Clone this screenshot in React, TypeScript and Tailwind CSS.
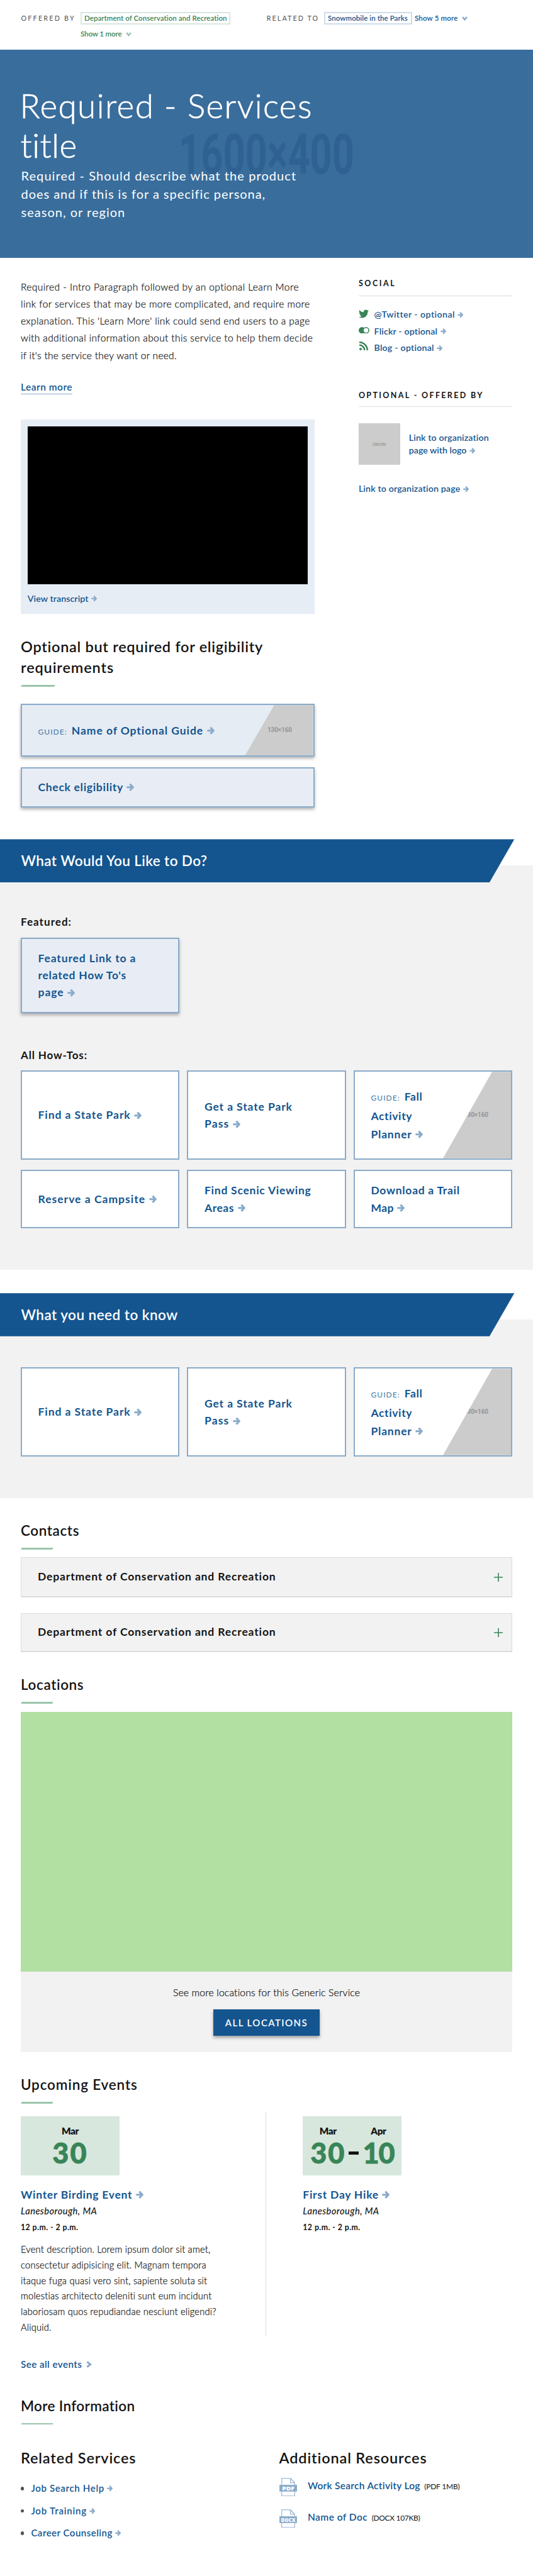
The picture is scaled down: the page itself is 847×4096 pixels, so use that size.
import React from "react";
import { FaTwitter, FaRss } from "react-icons/fa";

function Arrow({ className = "ml-[4.5px] size-[9.5px]" }: { className?: string }) {
  return (
    <svg viewBox="0 0 16 16" className={"inline-block fill-none stroke-[#8aabc9] align-baseline " + className}>
      <path d="M0.5 8h12" strokeWidth="3.8" />
      <path d="M7 1.5 13 8l-6 6.5" strokeWidth="4" />
    </svg>
  );
}

function BigArrow() {
  return <Arrow className="ml-[5.5px] size-[12.5px] translate-y-[0.5px]" />;
}

function Chevron({ className }: { className: string }) {
  return (
    <svg viewBox="0 0 16 16" className={"inline-block fill-none " + className}>
      <path d="M2 3.5 8 11l6-7.5" strokeWidth="4.5" />
    </svg>
  );
}

function Bar({ className }: { className: string }) {
  return <div className={"ml-[1px] -skew-x-[25deg] bg-[#9bc4ab] " + className} />;
}

function Placeholder({ className, w }: { className: string; w: number }) {
  return (
    <svg className={className}>
      <text x="0" y="8" textLength={w} lengthAdjust="spacing" className="fill-[#969696] font-['Roboto'] text-[10px]">
        130×160
      </text>
    </svg>
  );
}

const cardText = "text-[17.5px] font-bold text-[#14558f]";
const cardFrame = "flex items-center border-2 border-[#8aabc9] pl-[25.5px]";
const raised = "shadow-[0_3px_5px_rgba(0,0,0,0.3)]";
const light = "font-light [-webkit-text-stroke:0.25px]";

function Card({ children }: { children: React.ReactNode }) {
  return (
    <div className={"bg-white leading-[27.3px] " + cardFrame + " " + cardText}>
      <div>{children}</div>
    </div>
  );
}

function GuideLabel() {
  return <span className="mr-[7px] text-[12px] font-normal tracking-[0.088em] text-[#4377a5]">GUIDE:</span>;
}

function TopCards() {
  return (
    <>
      <Card><span className="tracking-[0.053em]">Find a State Park</span><BigArrow /></Card>
      <Card><span className="tracking-[0.051em]">Get a State Park</span><br /><span className="tracking-[0.064em]">Pass</span><BigArrow /></Card>
      <div className={"relative bg-white leading-[29px] " + cardFrame + " " + cardText}>
        <div className="relative z-10">
          <GuideLabel />
          <span className="tracking-[0.034em]">Fall</span>
          <br />
          <span className="tracking-[0.036em]">Activity</span>
          <br />
          <span className="tracking-[0.046em]">Planner</span>
          <BigArrow />
        </div>
        <div className="absolute inset-y-0 right-0 w-[108px] bg-[#ccc] [clip-path:polygon(78px_0,100%_0,100%_100%,0_100%)]">
          <Placeholder className="absolute top-[64px] left-[33px] h-[10px] w-[42px]" w={39} />
        </div>
      </div>
    </>
  );
}

function Banner({ children }: { children: React.ReactNode }) {
  return (
    <h2 className="h-[68.6px] bg-[#14558f] pl-[33.5px] text-[22.5px] leading-[69.5px] font-semibold text-white [clip-path:polygon(0_0,817.3px_0,777.9px_100%,0_100%)]">
      {children}
    </h2>
  );
}

function FileIcon({ label, w }: { label: string; w: number }) {
  return (
    <svg viewBox="0 0 34 36" className="h-[29.5px] w-[28px] shrink-0">
      <path d="M4.5 1h17l8 8.5V35h-25zM21.5 1v8.5h8" className="fill-white stroke-[#8aabc9]" strokeWidth="1.3" />
      <path d="M0 13.5h34v13H0z" className="fill-[#8aabc9]" />
      <text x={17 - w / 2} y="24" textLength={w} lengthAdjust="spacingAndGlyphs" className="fill-white font-['Open_Sans'] text-[11px] font-extrabold">
        {label}
      </text>
    </svg>
  );
}

function Plus() {
  return (
    <svg viewBox="0 0 14 14" className="mr-[14px] size-[14px] fill-none stroke-[#388557]" strokeWidth="1.6">
      <path d="M0 7h14M7 0v14" />
    </svg>
  );
}

function Contact({ className }: { className: string }) {
  return (
    <div className={"flex items-center justify-between border border-b-2 border-[#dcdcdc] bg-[#f2f2f2] pl-[26px] text-[17.5px] font-bold tracking-[0.049em] " + className}>
      Department of Conservation and Recreation
      <Plus />
    </div>
  );
}

function DateBox({ children }: { children: React.ReactNode }) {
  return <div className="flex h-[94.3px] w-[157px] justify-center bg-[#d7e7dd] pt-[13.9px]">{children}</div>;
}

function Day({ month, day, className }: { month: string; day: string; className: string }) {
  return (
    <div className="flex flex-col items-center">
      <div className="text-[15.2px] leading-[18px] font-extrabold tracking-[-0.025em] text-[#141414]">{month}</div>
      <div className={"mt-[3.8px] text-[45px] leading-[44px] font-black text-[#388557] [-webkit-text-stroke:0.8px] " + className}>{day}</div>
    </div>
  );
}

function EventInfo({ children }: { children: React.ReactNode }) {
  return (
    <>
      <div className="mt-[20.6px] text-[17.5px] leading-[20px] font-bold text-[#14558f]">{children}<BigArrow /></div>
      <div className="mt-[6.65px] text-[14.6px] leading-[20px] font-medium tracking-[0.032em] italic">Lanesborough, MA</div>
      <div className="mt-[5.5px] text-[12.3px] leading-[20px] font-bold tracking-[0.037em]">12 p.m. - 2 p.m.</div>
    </>
  );
}

function Bullet() {
  return <i className="mr-[11px] size-[5.4px] rounded-full bg-[#535353]" />;
}

const h2 = "text-[22.5px] leading-[30px] font-semibold";

export default function App() {
  return (
    <div className="h-[4096px] w-[847px] overflow-hidden bg-white font-['Lato','Open_Sans',sans-serif] whitespace-nowrap text-[#141414]">
      <header className="flex h-[79.4px] pt-[19px] pl-[33.5px] text-[11.5px] leading-[20.4px] font-semibold">
        <div className="w-[94.5px] text-[10.75px] font-normal tracking-[0.206em] text-[#535353]">OFFERED BY</div>
        <div className="w-[295.7px] text-[#388557]">
          <div className="w-[238px] border-2 border-[#d7e7dd] pl-[4px] leading-[16.4px] tracking-[0.005em]">Department of Conservation and Recreation</div>
          <div className="mt-[4.6px] flex items-center"><span className="tracking-[-0.010em]">Show 1 more</span><Chevron className="ml-[7px] size-[9px] stroke-[#9bc4ab]" /></div>
        </div>
        <div className="w-[91.3px] text-[10.75px] font-normal tracking-[0.194em] text-[#535353]">RELATED TO</div>
        <div className="flex h-[20.4px] items-center text-[#14558f]">
          <div className="w-[140px] border-2 border-[#d0dde9] pl-[4px] leading-[16.4px] tracking-[0.007em]">Snowmobile in the Parks</div>
          <span className="ml-[4px] tracking-[0.015em]">Show 5 more</span>
          <Chevron className="ml-[6.5px] size-[9px] stroke-[#8aabc9]" />
        </div>
      </header>

      <section className="relative h-[330.7px] bg-[#396d9c] pt-[56.5px] pl-[33.5px] text-white">
        <svg className="absolute top-[133.6px] left-[289px] h-[66px] w-[276px] overflow-visible">
          <text x="-5" y="63.4" textLength="279" lengthAdjust="spacingAndGlyphs" className="fill-[#2f6292] font-['Roboto'] text-[89px] font-bold">1600×400</text>
        </svg>
        <h1 className="relative -ml-[2px] text-[53px] leading-[63.4px] font-light [-webkit-text-stroke:0.6px]">
          <span className="tracking-[0.027em]">Required - Services</span><br />
          <span className="ml-[1px] tracking-[0.010em]">title</span>
        </h1>
        <p className="relative mt-[1.85px] text-[20px] leading-[29px]">
          <span className="tracking-[0.054em]">Required - Should describe what the product</span><br />
          <span className="tracking-[0.048em]">does and if this is for a specific persona,</span><br />
          <span className="tracking-[0.051em]">season, or region</span>
        </p>
      </section>

      <section className="flex h-[924.3px] pl-[33px]">
        <div className="w-[466.7px] pt-[32.5px]">
          <p className={"text-[15.5px] leading-[27.28px] " + light}>
            <span className="tracking-[0.027em]">Required - Intro Paragraph followed by an optional Learn More</span><br />
            <span className="tracking-[0.029em]">link for services that may be more complicated, and require more</span><br />
            <span className="tracking-[0.023em]">explanation. This 'Learn More' link could send end users to a page</span><br />
            <span className="tracking-[0.025em]">with additional information about this service to help them decide</span><br />
            <span className="tracking-[0.018em]">if it's the service they want or need.</span>
          </p>
          <div className="mt-[25.5px] w-fit border-b border-[#8aabc9] text-[15.5px] leading-[22px] font-semibold tracking-[0.031em] text-[#14558f]">Learn more</div>
          <div className="mt-[39.7px] h-[308.5px] bg-[#e6edf5] p-[10.8px]">
            <div className="h-[250.7px] bg-black" />
            <div className="mt-[13.3px] text-[14.2px] leading-[20px] font-semibold tracking-[0.006em] text-[#14558f]">View transcript<Arrow /></div>
          </div>
          <h2 className="mt-[36.5px] text-[23.5px] leading-[33px] font-semibold">
            <span className="tracking-[0.030em]">Optional but required for eligibility</span><br />
            <span className="tracking-[0.037em]">requirements</span>
          </h2>
          <Bar className="mt-[10.6px] h-[2.8px] w-[53px]" />
          <div className={"relative mt-[27.8px] h-[83.5px] bg-[#e5ecf4] " + cardFrame + " " + cardText + " " + raised}>
            <div className="pt-[2px]"><GuideLabel /><span className="tracking-[0.053em]">Name of Optional Guide</span><BigArrow /></div>
            <div className="absolute inset-y-0 right-0 w-[108px] bg-[#ccc] [clip-path:polygon(46px_0,100%_0,100%_100%,0_100%)]">
              <Placeholder className="absolute top-[35px] left-[35px] h-[10px] w-[42px]" w={39} />
            </div>
          </div>
          <div className={"mt-[16.7px] h-[64.7px] bg-[#e8edf5] " + cardFrame + " " + cardText + " " + raised}>
            <div className="tracking-[0.040em]">Check eligibility<BigArrow /></div>
          </div>
        </div>

        <aside className="ml-[70.2px] w-[244px] pt-[31.2px] text-[14.2px] font-semibold">
          <h3 className="text-[12.5px] leading-[20px] font-bold tracking-[0.205em]">SOCIAL</h3>
          <div className="mt-[8.4px] h-[1.65px] bg-[#dcdcdc]" />
          <ul className="mt-[16px] leading-[26.45px] text-[#14558f]">
            <li className="flex items-center">
              <FaTwitter className="mr-[8.7px] size-[16px] -translate-y-[2px] fill-[#388557]" />
              <span className="tracking-[0.031em]">@Twitter - optional</span><Arrow />
            </li>
            <li className="flex items-center">
              <svg viewBox="0 0 32 20" className="mr-[7.7px] h-[10.6px] w-[17px] -translate-y-[2px]">
                <circle cx="10" cy="10" r="10" className="fill-[#388557]" />
                <circle cx="22" cy="10" r="8.5" className="fill-white stroke-[#388557]" strokeWidth="3" />
              </svg>
              <span className="tracking-[0.012em]">Flickr - optional</span><Arrow />
            </li>
            <li className="flex items-center">
              <FaRss className="mr-[8.7px] size-[16px] -translate-y-[3px] fill-[#388557]" />
              <span className="tracking-[0.016em]">Blog - optional</span><Arrow />
            </li>
          </ul>
          <h3 className="mt-[51.9px] text-[12.5px] leading-[20px] font-bold tracking-[0.188em]">OPTIONAL - OFFERED BY</h3>
          <div className="mt-[7.3px] h-[1.65px] bg-[#dcdcdc]" />
          <div className="mt-[25.6px] flex items-center text-[#14558f]">
            <div className="flex h-[66.2px] w-[66.4px] items-center justify-center bg-[#ccc]">
              <svg className="h-[6px] w-[22px]">
                <text x="0" y="5.5" textLength="21" lengthAdjust="spacingAndGlyphs" className="fill-[#969696] font-['Roboto'] text-[7.5px]">250×250</text>
              </svg>
            </div>
            <div className="ml-[13.5px] leading-[19.8px]"><span className="tracking-[0.011em]">Link to organization</span><br />page with logo<Arrow /></div>
          </div>
          <div className="mt-[28px] leading-[20px] tracking-[0.011em] text-[#14558f]">Link to organization page<Arrow /></div>
        </aside>
      </section>

      <section className="h-[684.7px] bg-[linear-gradient(#fff_42px,#f2f2f2_42px)]">
        <Banner><span className="tracking-[0.017em]">What Would You Like to Do?</span></Banner>
        <div className="px-[33px]">
          <h3 className="mt-[52.9px] text-[17px] leading-[20px] font-bold tracking-[0.062em]">Featured:</h3>
          <div className={"mt-[14.8px] h-[119.9px] w-[252.2px] bg-[#e8edf5] leading-[27.3px] " + cardFrame + " " + cardText + " " + raised}>
            <div>
              <span className="tracking-[0.050em]">Featured Link to a</span><br />
              <span className="tracking-[0.043em]">related How To's</span><br />
              <span className="tracking-[0.055em]">page</span><BigArrow />
            </div>
          </div>
          <h3 className="mt-[57.2px] text-[17px] leading-[20px] font-bold tracking-[0.051em]">All How-Tos:</h3>
          <div className="mt-[14.6px] grid grid-cols-3 grid-rows-[141.4px_92.6px] gap-x-[12.4px] gap-y-[16.5px]">
            <TopCards />
            <Card><span className="tracking-[0.058em]">Reserve a Campsite</span><BigArrow /></Card>
            <Card><span className="tracking-[0.043em]">Find Scenic Viewing</span><br /><span className="tracking-[0.031em]">Areas</span><BigArrow /></Card>
            <Card><span className="tracking-[0.041em]">Download a Trail</span><br /><span className="tracking-[0.023em]">Map</span><BigArrow /></Card>
          </div>
        </div>
      </section>

      <section className="mt-[37.2px] h-[325.7px] bg-[linear-gradient(#fff_41.6px,#f2f2f2_41.6px)]">
        <Banner><span className="tracking-[0.021em]">What you need to know</span></Banner>
        <div className="mt-[49.6px] grid grid-cols-3 grid-rows-[141.4px] gap-x-[12.4px] px-[33px]">
          <TopCards />
        </div>
      </section>

      <main className="px-[33px]">
        <h2 className={"mt-[36.7px] tracking-[0.026em] " + h2}>Contacts</h2>
        <Bar className="mt-[11.9px] h-[2.5px] w-[49.7px]" />
        <Contact className="mt-[13.2px] h-[63.7px]" />
        <Contact className="mt-[24.8px] h-[62.8px]" />

        <h2 className={"mt-[36.4px] tracking-[0.027em] " + h2}>Locations</h2>
        <Bar className="mt-[12.1px] h-[2.5px] w-[49.7px]" />
        <div className="mt-[13.3px] h-[413.2px] bg-[#b2dfa2]" />
        <div className="flex h-[128.3px] flex-col items-center bg-[#f2f2f2] pt-[23px]">
          <p className={"text-[15.7px] leading-[20px] tracking-[0.011em] " + light}>See more locations for this Generic Service</p>
          <div className="mt-[17.5px] flex h-[41.4px] w-[169.7px] items-center justify-center bg-[#14558f] text-[15px] font-semibold tracking-[0.096em] text-white shadow-[0_3px_5px_rgba(0,0,0,0.35)]">ALL LOCATIONS</div>
        </div>

        <h2 className={"mt-[36.7px] tracking-[0.037em] " + h2}>Upcoming Events</h2>
        <Bar className="mt-[11.9px] h-[2.5px] w-[49.7px]" />
        <div className="mt-[13.2px] flex h-[357.2px]">
          <div className="w-[390.2px] border-r border-[#dcdcdc] pt-[7.4px]">
            <DateBox><Day month="Mar" day="30" className="tracking-[0.045em]" /></DateBox>
            <EventInfo><span className="tracking-[0.041em]">Winter Birding Event</span></EventInfo>
            <p className={"mt-[13.1px] text-[14.6px] leading-[24.82px] tracking-[0.017em] " + light}>
              Event description. Lorem ipsum dolor sit amet,<br />
              consectetur adipisicing elit. Magnam tempora<br />
              itaque fuga quasi vero sint, sapiente soluta sit<br />
              molestias architecto deleniti sunt eum incidunt<br />
              laboriosam quos repudiandae nesciunt eligendi?<br />
              Aliquid.
            </p>
          </div>
          <div className="pt-[7.4px] pl-[58.1px]">
            <DateBox>
              <Day month="Mar" day="30" className="tracking-[0.045em]" />
              <div className="mt-[42.6px] mr-[6px] ml-[5px] h-[4.7px] w-[16px] bg-[#141414]" />
              <Day month="Apr" day="10" className="tracking-[-0.025em]" />
            </DateBox>
            <EventInfo><span className="tracking-[0.043em]">First Day Hike</span></EventInfo>
          </div>
        </div>
        <div className="mt-[34.5px] flex items-center text-[15.2px] leading-[20px] font-semibold tracking-[0.029em] text-[#14558f]">
          See all events<Chevron className="ml-[5.5px] size-[11px] -rotate-90 stroke-[#8aabc9]" />
        </div>

        <h2 className={"mt-[41.3px] tracking-[0.016em] " + h2}>More Information</h2>
        <Bar className="mt-[12.3px] h-[2.4px] w-[49.7px]" />
        <div className="mt-[37.7px] flex text-[15px] font-semibold text-[#14558f]">
          <div className="w-[410.5px]">
            <h3 className="text-[23.5px] leading-[30px] tracking-[0.036em] text-[#141414]">Related Services</h3>
            <ul className="mt-[16.2px] leading-[35.5px]">
              <li className="flex items-center"><Bullet /><span className="tracking-[0.044em]">Job Search Help</span><Arrow /></li>
              <li className="flex items-center"><Bullet /><span className="tracking-[0.053em]">Job Training</span><Arrow /></li>
              <li className="flex items-center"><Bullet /><span className="tracking-[0.033em]">Career Counseling</span><Arrow /></li>
            </ul>
          </div>
          <div>
            <h3 className="text-[23.5px] leading-[30px] tracking-[0.036em] text-[#141414]">Additional Resources</h3>
            <div className="mt-[16.9px] flex h-[29.5px] items-center">
              <FileIcon label="PDF" w={24} />
              <div className="ml-[17.4px] pb-[3px] text-[15.5px] tracking-[0.018em]">
                Work Search Activity Log<span className="ml-[6.5px] text-[12px] font-normal tracking-[-0.018em] text-[#141414]">(PDF 1MB)</span>
              </div>
            </div>
            <div className="mt-[20.6px] flex h-[29.5px] items-center">
              <FileIcon label="DOCX" w={28} />
              <div className="ml-[17.4px] pb-[3px] text-[15.5px] tracking-[0.030em]">
                Name of Doc<span className="ml-[6.5px] text-[12px] font-normal tracking-[-0.027em] text-[#141414]">(DOCX 107KB)</span>
              </div>
            </div>
          </div>
        </div>
      </main>
    </div>
  );
}
